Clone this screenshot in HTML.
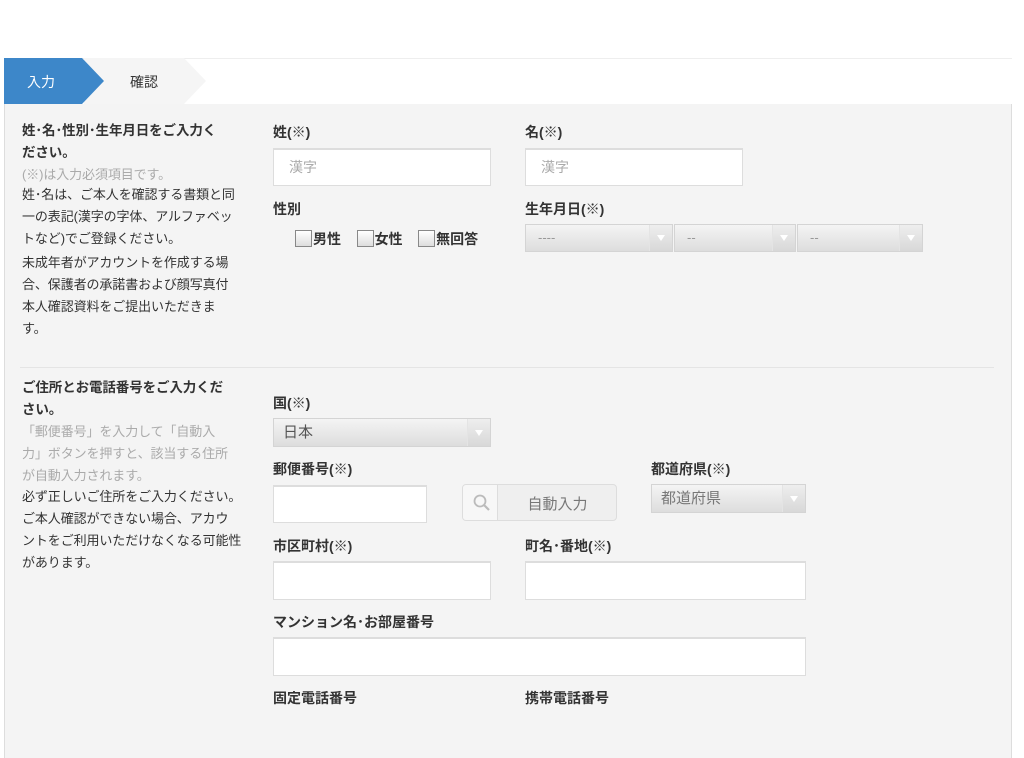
<!DOCTYPE html>
<html><head><meta charset="utf-8"><style>
*{margin:0;padding:0;box-sizing:border-box}
body{width:1024px;height:713px;background:#fff;font-family:"Liberation Sans","Noto Sans CJK JP",sans-serif;position:relative;overflow:hidden;color:#333}
.a{position:absolute}
.panel{left:4px;top:58px;width:1008px;height:700px;background:#f4f4f4;border-left:1px solid #ddd;border-right:1px solid #ddd}
.tabs{left:4px;top:58px;width:1008px;height:46px;background:#fff;border-top:1px solid #eee}
.lt{font-size:13px;line-height:22px;color:#333;left:22px;width:235px;letter-spacing:-0.1px}
.lt b{font-size:13.5px}
.g{color:#aaa}
.lb{font-size:14px;font-weight:bold;color:#333}
.in{background:#fff;border:1px solid #ddd;border-top:2px solid #ddd}
.sel{background:linear-gradient(#f4f4f4,#ddd);border:1px solid #d4d4d4;font-size:13px;color:#999;padding-left:12px}
.sel::after{content:"";position:absolute;right:0;top:0;bottom:0;width:22px;background:linear-gradient(#eee,#d8d8d8);border-left:1px solid #e4e4e4}
.sel i{position:absolute;right:7px;top:50%;margin-top:-3px;border-left:4px solid transparent;border-right:4px solid transparent;border-top:6px solid #fff;z-index:2}
.cb{width:17px;height:17px;border:1px solid #888;background:linear-gradient(#fff,#ddd);display:inline-block;vertical-align:-3px;margin-right:1px}
.ph{font-size:14px;color:#aaa;padding:7px 0 0 15px}
</style></head><body>
<div class="a panel"></div>
<div class="a tabs"></div>
<svg class="a" style="left:4px;top:58px" width="210" height="46">
<polygon points="80,0 180,0 202,23 180,46 80,46" fill="#f5f5f5"/>
<polygon points="0,0 78,0 100,23 78,46 0,46" fill="#3d87c9"/>
</svg>
<div class="a" style="left:27px;top:72px;font-size:14px;color:#fff">入力</div>
<div class="a" style="left:130px;top:72px;font-size:14px;color:#333">確認</div>

<div class="a lt" style="top:120px"><b>姓･名･性別･生年月日をご入力く<br>ださい。</b><br><span class="g">(※)は入力必須項目です。</span></div>
<div class="a lt" style="top:184px">姓･名は、ご本人を確認する書類と同<br>一の表記(漢字の字体、アルファベッ<br>トなど)でご登録ください。</div>
<div class="a lt" style="top:252px">未成年者がアカウントを作成する場<br>合、保護者の承諾書および顔写真付<br>本人確認資料をご提出いただきま<br>す。</div>

<div class="a lb" style="left:273px;top:122px">姓(※)</div>
<div class="a in ph" style="left:273px;top:148px;width:218px;height:38px">漢字</div>
<div class="a lb" style="left:525px;top:122px">名(※)</div>
<div class="a in ph" style="left:525px;top:148px;width:218px;height:38px">漢字</div>
<div class="a lb" style="left:273px;top:199px">性別</div>
<div class="a lb" style="left:295px;top:229px;word-spacing:0"><span class="cb"></span>男性&nbsp;&nbsp;&nbsp;&nbsp;<span class="cb"></span>女性&nbsp;&nbsp;&nbsp;&nbsp;<span class="cb"></span>無回答</div>
<div class="a lb" style="left:525px;top:199px">生年月日(※)</div>
<div class="a sel" style="left:525px;top:224px;width:148px;height:28px;line-height:26px">----<i></i></div>
<div class="a sel" style="left:674px;top:224px;width:122px;height:28px;line-height:26px">--<i></i></div>
<div class="a sel" style="left:797px;top:224px;width:126px;height:28px;line-height:26px">--<i></i></div>

<div class="a" style="left:20px;top:367px;width:974px;height:1px;background:#e4e4e4"></div>

<div class="a lt" style="top:377px"><b>ご住所とお電話番号をご入力くだ<br>さい。</b><br><span class="g">「郵便番号」を入力して「自動入<br>力」ボタンを押すと、該当する住所<br>が自動入力されます。</span></div>
<div class="a lt" style="top:486px">必ず正しいご住所をご入力ください。<br>ご本人確認ができない場合、アカウ<br>ントをご利用いただけなくなる可能性<br>があります。</div>

<div class="a lb" style="left:273px;top:393px">国(※)</div>
<div class="a sel" style="left:273px;top:418px;width:218px;height:29px;line-height:27px;color:#555;font-size:15px;padding-left:9px">日本<i></i></div>
<div class="a lb" style="left:273px;top:459px">郵便番号(※)</div>
<div class="a in" style="left:273px;top:485px;width:154px;height:38px"></div>
<div class="a" style="left:462px;top:484px;width:155px;height:37px;border:1px solid #ddd;border-radius:4px;background:#efefef;overflow:hidden">
<div class="a" style="left:0;top:0;width:35px;height:35px;background:#f7f7f7;border-right:1px solid #ddd"></div>
<svg class="a" style="left:10px;top:9px" width="18" height="18"><circle cx="7" cy="7" r="5.5" fill="none" stroke="#bbb" stroke-width="1.8"/><line x1="11" y1="11" x2="16" y2="16" stroke="#bbb" stroke-width="2.2"/></svg>
<div class="a" style="left:36px;top:8px;width:117px;text-align:center;font-size:15px;color:#777">自動入力</div>
</div>
<div class="a lb" style="left:651px;top:459px">都道府県(※)</div>
<div class="a sel" style="left:651px;top:484px;width:155px;height:29px;line-height:27px;color:#777;font-size:15px;padding-left:9px">都道府県<i></i></div>
<div class="a lb" style="left:273px;top:536px">市区町村(※)</div>
<div class="a in" style="left:273px;top:561px;width:218px;height:39px"></div>
<div class="a lb" style="left:525px;top:536px">町名･番地(※)</div>
<div class="a in" style="left:525px;top:561px;width:281px;height:39px"></div>
<div class="a lb" style="left:273px;top:612px">マンション名･お部屋番号</div>
<div class="a in" style="left:273px;top:637px;width:533px;height:39px"></div>
<div class="a lb" style="left:273px;top:688px">固定電話番号</div>
<div class="a lb" style="left:525px;top:688px">携帯電話番号</div>
</body></html>
